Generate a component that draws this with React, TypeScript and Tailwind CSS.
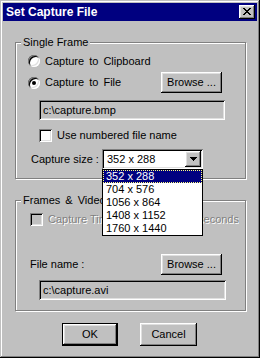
import React from "react";

const raised =
  "shadow-[inset_-1px_-1px_#000,inset_1px_1px_#fff,inset_-2px_-2px_#808080,inset_2px_2px_#dfdfdf]";
const sunken =
  "shadow-[inset_1px_1px_#808080,inset_-1px_-1px_#fff,inset_2px_2px_#000,inset_-2px_-2px_#dfdfdf]";
const etched = "border border-[#808080] shadow-[inset_1px_1px_#fff,1px_1px_#fff]";
const disabledText = "text-[#808080] [text-shadow:1px_1px_#fff]";

function Radio({ checked }: { checked?: boolean }) {
  return (
    <div
      className={`w-[12px] h-[12px] rounded-full bg-white flex items-center justify-center shrink-0 ${sunken}`}
    >
      {checked && <div className="w-[4px] h-[4px] rounded-full bg-black" />}
    </div>
  );
}

function Button({ children, w, isDefault }: { children: React.ReactNode; w: string; isDefault?: boolean }) {
  if (isDefault) {
    return (
      <div className={`${w} h-[23px] border border-black flex`}>
        <div className={`flex-1 flex items-center justify-center ${raised}`}>{children}</div>
      </div>
    );
  }
  return <div className={`${w} h-[23px] flex items-center justify-center ${raised}`}>{children}</div>;
}

export default function App() {
  return (
    <div
      className="w-[260px] h-[358px] bg-[#c0c0c0] p-[3px] flex flex-col text-[11px] leading-none text-black font-['Liberation_Sans',Arial,sans-serif] shadow-[inset_-1px_-1px_#000,inset_1px_1px_#c0c0c0,inset_-2px_-2px_#808080,inset_2px_2px_#fff]"
    >
      {/* Title bar */}
      <div className="h-[18px] bg-[#000080] flex items-center justify-between pl-[3px] pr-[2px]">
        <span className="text-white font-bold text-[12px]">Set Capture File</span>
        <div className={`w-[16px] h-[14px] bg-[#c0c0c0] flex items-center justify-center ${raised}`}>
          <svg width="8" height="7" viewBox="0 0 8 7" shapeRendering="crispEdges" className="-mt-[1px]">
            <path
              d="M0 0h2v1h-2zM6 0h2v1h-2zM1 1h2v1h-2zM5 1h2v1h-2zM2 2h4v1h-4zM3 3h2v1h-2zM2 4h4v1h-4zM1 5h2v1h-2zM5 5h2v1h-2zM0 6h2v1h-2zM6 6h2v1h-2z"
              fill="#000"
            />
          </svg>
        </div>
      </div>

      {/* Single Frame group */}
      <div className={`relative mt-[21px] ml-[12px] w-[231px] flex flex-col pb-[9px] ${etched}`}>
        <span className="absolute left-[5px] -top-[7px] bg-[#c0c0c0] px-[2px] leading-[13px]">
          Single Frame
        </span>

        <div className="mt-[10px] h-[16px] flex items-center pl-[12px]">
          <Radio />
          <span className="ml-[5px] [word-spacing:2px]">Capture to Clipboard</span>
        </div>

        <div className="mt-[3px] h-[21px] flex items-center pl-[12px] pr-[23px]">
          <Radio checked />
          <span className="ml-[5px] [word-spacing:2px]">Capture to File</span>
          <div className={`ml-auto w-[61px] h-[21px] flex items-center justify-center ${raised}`}>Browse ...</div>
        </div>

        <div className={`mt-[7px] ml-[23px] w-[186px] h-[20px] flex items-center pl-[4px] bg-[#c0c0c0] ${sunken}`}>
          {"c:\\capture.bmp"}
        </div>

        <div className="mt-[9px] h-[13px] flex items-center pl-[23px]">
          <div className={`w-[13px] h-[13px] bg-white shrink-0 ${sunken}`} />
          <span className="ml-[5px]">Use numbered file name</span>
        </div>

        <div className="mt-[7px] h-[20px] flex items-center pl-[15px]">
          <span className="w-[71px]">Capture size :</span>
          <div className={`relative w-[101px] h-[20px] bg-white flex items-center ${sunken}`}>
            <span className="pl-[5px]">352 x 288</span>
            <div
              className={`absolute right-[2px] top-[2px] w-[16px] h-[16px] bg-[#c0c0c0] flex items-center justify-center ${raised}`}
            >
              <svg width="7" height="4" viewBox="0 0 7 4" shapeRendering="crispEdges">
                <path d="M0 0h7v1h-7zM1 1h5v1h-5zM2 2h3v1h-3zM3 3h1v1h-1z" fill="#000" />
              </svg>
            </div>

            {/* Dropdown list */}
            <div className="absolute left-0 top-[20px] w-[101px] border border-black bg-white z-10 flex flex-col">
              <div className="h-[13px] flex items-center pl-[3px] bg-[#000080] text-white outline-1 outline-dotted outline-[#ffff80] -outline-offset-1">
                352 x 288
              </div>
              <div className="h-[13px] flex items-center pl-[3px]">704 x 576</div>
              <div className="h-[13px] flex items-center pl-[3px]">1056 x 864</div>
              <div className="h-[13px] flex items-center pl-[3px]">1408 x 1152</div>
              <div className="h-[13px] flex items-center pl-[3px]">1760 x 1440</div>
            </div>
          </div>
        </div>
      </div>

      {/* Frames & Video group */}
      <div className={`relative mt-[21px] ml-[12px] w-[231px] flex flex-col pb-[10px] ${etched}`}>
        <span className="absolute left-[5px] -top-[7px] bg-[#c0c0c0] px-[2px] leading-[13px] [word-spacing:2px]">
          Frames &amp; Video
        </span>

        <div className="mt-[12px] h-[13px] flex items-center pl-[14px] pr-[6px]">
          <div className={`w-[13px] h-[13px] bg-[#c0c0c0] shrink-0 ${sunken}`} />
          <span className={`ml-[5px] w-[54px] overflow-hidden whitespace-nowrap leading-[13px] ${disabledText}`}>
            Capture Time lapse
          </span>
          <span
            className={`ml-auto w-[36px] overflow-hidden whitespace-nowrap flex justify-end leading-[13px] ${disabledText}`}
          >
            <span className="shrink-0">seconds</span>
          </span>
        </div>

        <div className="mt-[28px] h-[21px] flex items-center pl-[14px] pr-[23px]">
          <span>File name :</span>
          <div className={`ml-auto w-[61px] h-[21px] flex items-center justify-center ${raised}`}>Browse ...</div>
        </div>

        <div className={`mt-[5px] ml-[23px] w-[187px] h-[20px] flex items-center pl-[4px] bg-[#c0c0c0] ${sunken}`}>
          {"c:\\capture.avi"}
        </div>
      </div>

      {/* Buttons */}
      <div className="mt-[12px] flex pl-[59px] gap-[22px]">
        <Button w="w-[56px]" isDefault>
          OK
        </Button>
        <Button w="w-[57px]">Cancel</Button>
      </div>
    </div>
  );
}
